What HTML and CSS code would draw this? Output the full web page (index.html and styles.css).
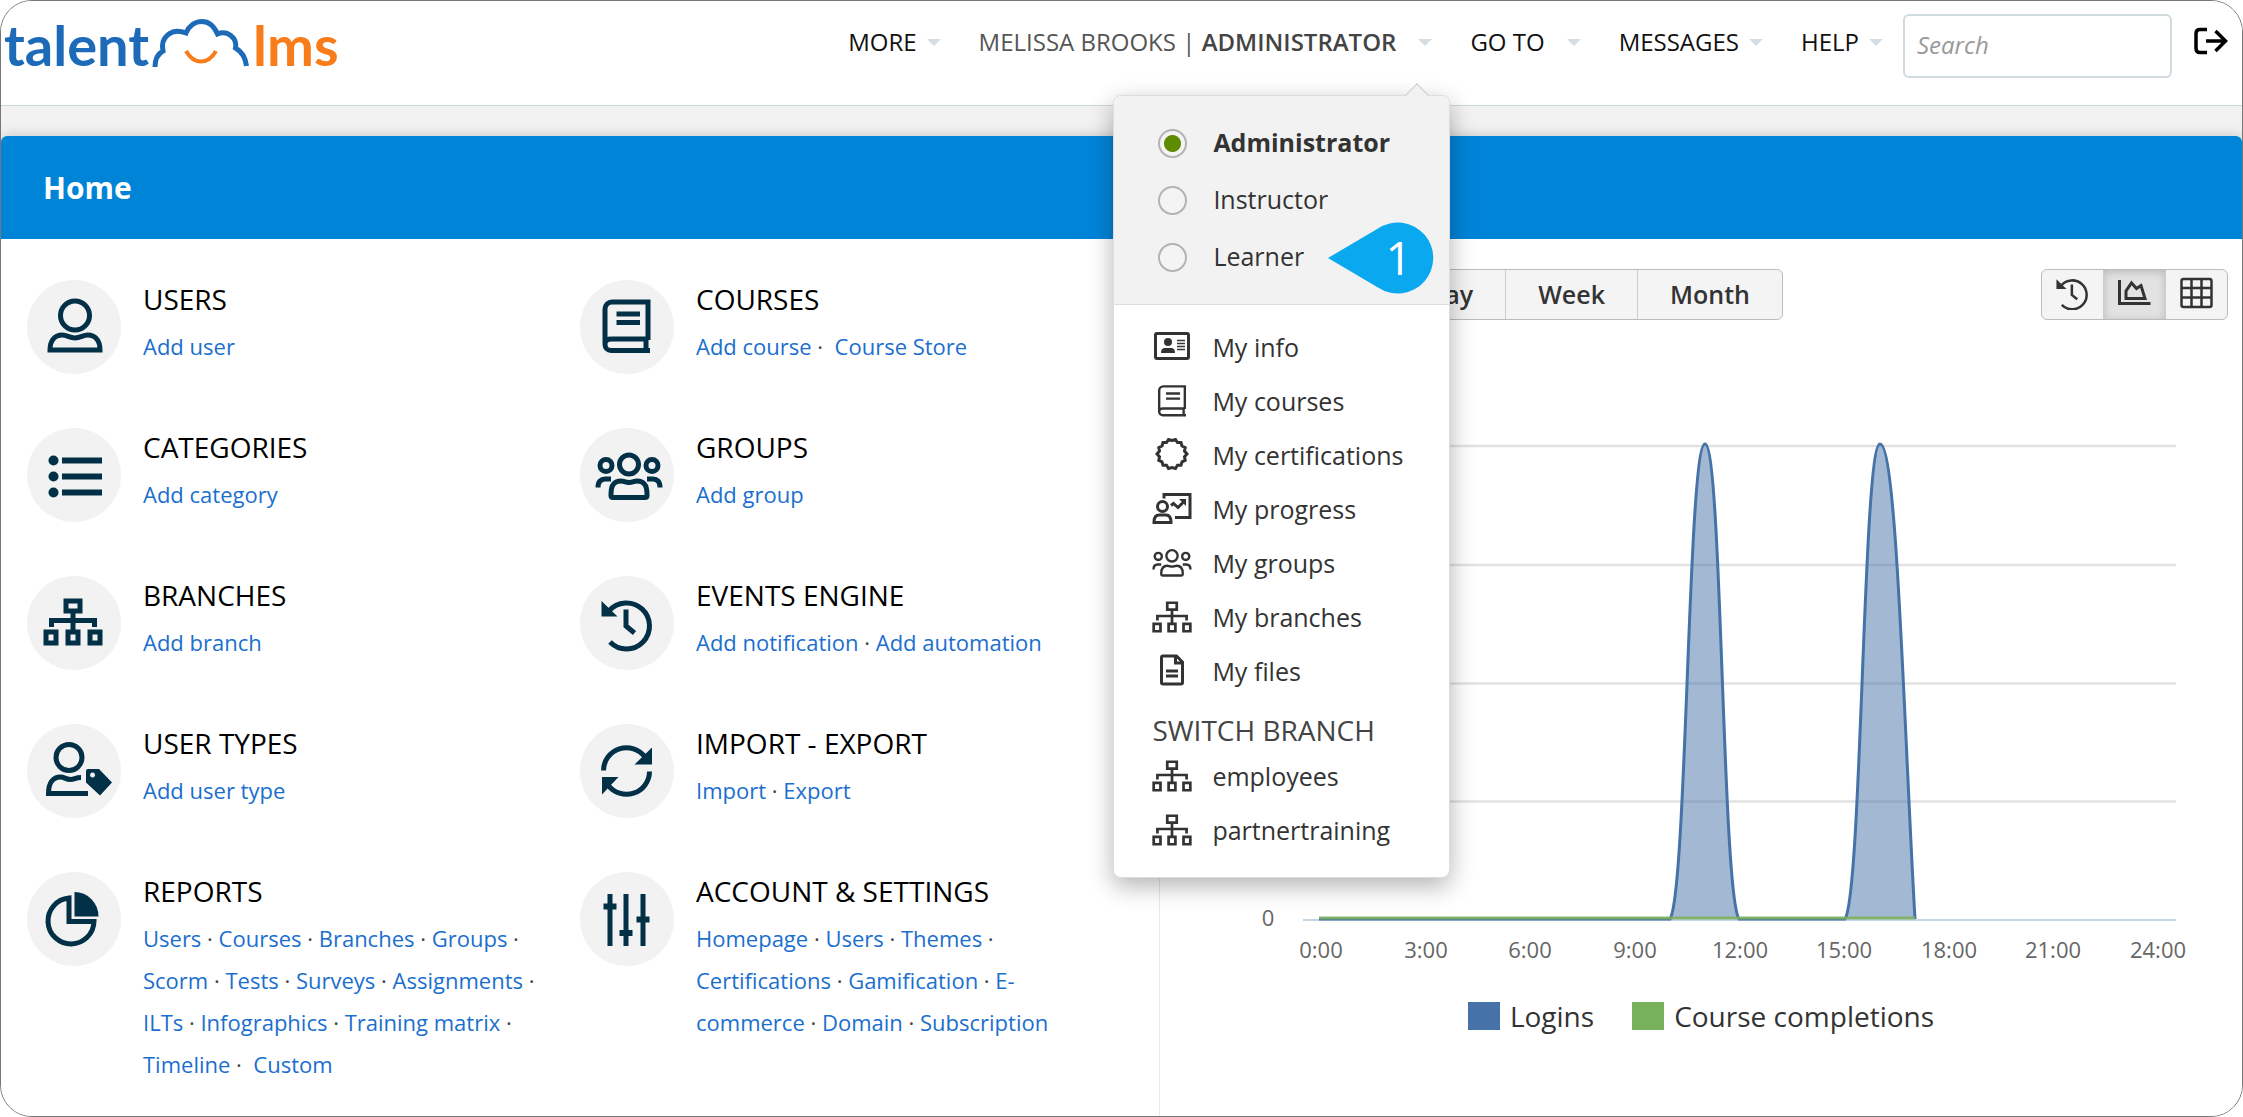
FILE: index.html
```html
<!DOCTYPE html>
<html lang="en">
<head>
<meta charset="utf-8">
<title>TalentLMS - Home</title>
<link rel="stylesheet" href="styles.css">
</head>
<body>
<svg class="defs" width="0" height="0" aria-hidden="true">
  <defs>
    <g id="i-user"><circle cx="48" cy="35.500" r="14.500"/><path d="M23 70c0-9 4.500-15 12.500-15 4.500 0 7 3 12.500 3s8-3 12.500-3C68.500 55 73 61 73 70z"/></g>
    <g id="i-list"><path d="M35 32.500h40M35 48.500h40M35 64.500h40" stroke-width="6"/><g class="solid"><circle cx="26.500" cy="32.500" r="5"/><circle cx="26.500" cy="48.500" r="5"/><circle cx="26.500" cy="64.500" r="5"/></g></g>
    <g id="i-sitemap"><path d="M39 25h14v10H39zM19 56h10v11H19zM41 56h10v11H41zM63 56h10v11H63zM46 36v20M24.500 51v-6.500h43V51"/></g>
    <g id="i-usertag"><circle cx="42" cy="33.500" r="13"/><path d="M61 69.500H21.500C21.500 59 26 53 33.500 53c4 0 5 2.500 10 2.500 4 0 5-2 10.500-2"/><path class="solid" fill-rule="evenodd" d="M59 47q0-2 2-2h11l13 13.500L73 71.500 59 58.500zM65.500 48.500a2.500 2.500 0 1 0 .1 0z"/></g>
    <g id="i-pie"><path d="M42 26v23.500h25A23 23 0 1 1 42 26z"/><path class="solid" d="M47.500 20a24 24.500 0 0 1 24 24.500h-24z"/></g>
    <g id="i-book"><path d="M68 60V22H32a7 7 0 0 0-7 7v35.500a6 6 0 0 0 6 6h39M25 63q1-4 6-4h37M66 59v11M36.500 34H60M36.500 42.500H60"/></g>
    <g id="i-groups"><circle cx="49" cy="36.500" r="9.500"/><circle cx="26" cy="37.500" r="6"/><circle cx="72" cy="37.500" r="6"/><path d="M31 66c0-9 3-13 10-13 3 0 4 1.500 8 1.500s5-1.500 8-1.500c7 0 10 4 10 13v1.500q0 2-2 2H33q-2 0-2-2zM18 59.500c0-6 3-8.500 7-8.500h6M80 59.500c0-6-3-8.500-7-8.500h-6"/></g>
    <g id="i-history"><path d="M29 35a23 23 0 1 1 1 31M46 33.500V50l8.500 7"/><path class="solid" d="M21.500 25v15.500h16z"/></g>
    <g id="i-sync"><path d="M23.500 46.500A23 23 0 0 1 65 33M69.500 47.500A23 23 0 0 1 28 61"/><path class="solid" d="M72 23.500v17H54.500zM22 70.500v-17.500h16.500z"/></g>
    <g id="i-sliders"><path d="M30 22v52M46 22v52M63 22v52" stroke-width="5"/><path d="M23.500 34.500h13M39.500 61h13M56.500 47.500h13" stroke-width="6"/></g>
  </defs>
</svg>

<div class="app">
  <header class="topbar">
    <a class="logo" href="#" aria-label="talentlms">
      <span class="logo-talent">talent</span>
      <svg class="logo-cloud" viewBox="152 16 98 52" aria-hidden="true"><path d="M155 67c0-7 2.500-13 8-16-3-13 8-24 23-18 3-7 9-11.500 16-11.500S214 26 217.500 34c10-4 20 4 18 14 7 4 10 10 11 18" fill="none" stroke="#1d6bb8" stroke-width="5"/><path d="M186 51q6 10.500 15 10.500T216 51" fill="none" stroke="#f97c1a" stroke-width="4"/></svg>
      <span class="logo-lms">lms</span>
    </a>
    <nav class="nav">
      <button class="nav-item" type="button">MORE</button>
      <div class="nav-user">
        <button class="nav-item nav-item-wide nav-item-current" type="button"><span>MELISSA BROOKS | <strong>ADMINISTRATOR</strong></span></button>
        <div class="popup">
          <fieldset class="roles" aria-label="Role">
            <label class="role"><input type="radio" name="role" checked><span>Administrator</span></label>
            <label class="role"><input type="radio" name="role"><span>Instructor</span></label>
            <label class="role"><input type="radio" name="role"><span>Learner</span></label>
          </fieldset>
          <div class="menu">
            <a href="#"><svg viewBox="0 0 40 34"><rect x="3.500" y="3.500" width="33" height="25" rx="1.500" stroke-width="3"/><path stroke-width="1.500" d="M25 10.500h8M25 13.500h8M25 16.500h8M25 19.500h8"/><g class="solid"><circle cx="16" cy="12" r="4"/><path d="M9 23q0-5 4-5h6q4 0 4 5z"/></g></svg>My info</a>
            <a href="#"><svg viewBox="13 18 67 57"><use href="#i-book"/></svg>My courses</a>
            <a href="#"><svg viewBox="0 0 40 34"><path stroke-width="3" d="M20 2.500 23.500 1.500 25.500 4.500 29 4.500 30 8 33.200 9.500 32.500 13 35 16 32.500 18.700 33.200 22.300 30 23.800 29 27.300 25.500 27.300 23.500 30.500 20 29.500 16.500 30.500 14.500 27.300 11 27.300 10 23.800 6.800 22.300 7.500 18.700 5 16 7.500 13 6.800 9.500 10 8 11 4.500 14.500 4.500 16.500 1.500z"/></svg>My certifications</a>
            <a href="#"><svg viewBox="0 0 40 34"><path stroke-width="3" d="M12 6.500V2.500h26v23H23M19 13.500l2.500-2 4.500 4 6-6"/><circle cx="10.500" cy="14.500" r="5" stroke-width="3"/><path stroke-width="3" d="M2 30.500c0-5.500 2-7.500 5-7.500h7c3 0 5 2 5 7.500z"/><path class="solid" d="M27 7h7v7z"/></svg>My progress</a>
            <a href="#"><svg viewBox="15.500 20 67 57"><use href="#i-groups"/></svg>My groups</a>
            <a href="#"><svg viewBox="16.500 21 59 50"><use href="#i-sitemap"/></svg>My branches</a>
            <a href="#"><svg viewBox="0 0 40 34"><path stroke-width="3" d="M24.500 2H11q-1.500 0-1.500 1.500v25q0 1.500 1.500 1.500h18q1.500 0 1.500-1.500V8zM23.500 2.500V9h7M14 17h12M14 22h12"/></svg>My files</a>
            <h2 class="menu-title">SWITCH BRANCH</h2>
            <a href="#"><svg viewBox="16.500 21 59 50"><use href="#i-sitemap"/></svg>employees</a>
            <a href="#"><svg viewBox="16.500 21 59 50"><use href="#i-sitemap"/></svg>partnertraining</a>
          </div>
          <div class="callout"><svg viewBox="0 0 106 72" aria-hidden="true"><path fill="#0aa8ef" d="M0 36 50 6.500A35.500 35.500 0 1 1 50 65.500z"/></svg><span>1</span></div>
        </div>
      </div>
      <button class="nav-item nav-item-wide" type="button">GO TO</button>
      <button class="nav-item" type="button">MESSAGES</button>
      <button class="nav-item" type="button">HELP</button>
    </nav>
    <input class="search" type="search" placeholder="Search" aria-label="Search">
    <button class="logout" type="button" aria-label="Log out"><svg viewBox="0 0 34 28"><path d="M13 2.500H6q-4 0-4 4v15q0 4 4 4h7M12 14h19M21.500 4l10 10-10 10" fill="none" stroke="#000" stroke-width="3.500"/></svg></button>
  </header>

  <main class="page">
    <h1 class="page-title">Home</h1>
    <div class="columns">
      <div class="tiles">
        <section class="tile"><svg class="tile-icon" viewBox="0 0 94 94"><use href="#i-user"/></svg><div><h2>USERS</h2><p><a href="#">Add user</a></p></div></section>
        <section class="tile"><svg class="tile-icon" viewBox="0 0 94 94"><use href="#i-book"/></svg><div><h2>COURSES</h2><p><a href="#">Add course</a> · &nbsp;<a href="#">Course Store</a></p></div></section>
        <section class="tile"><svg class="tile-icon" viewBox="0 0 94 94"><use href="#i-list"/></svg><div><h2>CATEGORIES</h2><p><a href="#">Add category</a></p></div></section>
        <section class="tile"><svg class="tile-icon" viewBox="0 0 94 94"><use href="#i-groups"/></svg><div><h2>GROUPS</h2><p><a href="#">Add group</a></p></div></section>
        <section class="tile"><svg class="tile-icon" viewBox="0 0 94 94"><use href="#i-sitemap"/></svg><div><h2>BRANCHES</h2><p><a href="#">Add branch</a></p></div></section>
        <section class="tile"><svg class="tile-icon" viewBox="0 0 94 94"><use href="#i-history"/></svg><div><h2>EVENTS ENGINE</h2><p><a href="#">Add notification</a> · <a href="#">Add automation</a></p></div></section>
        <section class="tile"><svg class="tile-icon" viewBox="0 0 94 94"><use href="#i-usertag"/></svg><div><h2>USER TYPES</h2><p><a href="#">Add user type</a></p></div></section>
        <section class="tile"><svg class="tile-icon" viewBox="0 0 94 94"><use href="#i-sync"/></svg><div><h2>IMPORT - EXPORT</h2><p><a href="#">Import</a> · <a href="#">Export</a></p></div></section>
        <section class="tile"><svg class="tile-icon" viewBox="0 0 94 94"><use href="#i-pie"/></svg><div><h2>REPORTS</h2><p><a href="#">Users</a> · <a href="#">Courses</a> · <a href="#">Branches</a> · <a href="#">Groups</a> · <a href="#">Scorm</a> · <a href="#">Tests</a> · <a href="#">Surveys</a> · <a href="#">Assignments</a> · <a href="#">ILTs</a> · <a href="#">Infographics</a> · <a href="#">Training matrix</a> · <a href="#">Timeline</a> · &nbsp;<a href="#">Custom</a></p></div></section>
        <section class="tile"><svg class="tile-icon" viewBox="0 0 94 94"><use href="#i-sliders"/></svg><div><h2>ACCOUNT &amp; SETTINGS</h2><p><a href="#">Homepage</a> · <a href="#">Users</a> · <a href="#">Themes</a> · <a href="#">Certifications</a> · <a href="#">Gamification</a> · <a href="#">E-commerce</a> · <a href="#">Domain</a> · <a href="#">Subscription</a></p></div></section>
      </div>

      <section class="stats">
        <div class="toolbar">
          <div class="group">
            <button type="button">Day</button><button type="button">Week</button><button type="button">Month</button>
          </div>
          <div class="group group-icons">
            <button type="button" aria-label="Timeline"><svg viewBox="20 20 54 54"><use href="#i-history"/></svg></button>
            <button type="button" class="active" aria-label="Chart"><svg viewBox="0 0 34 34"><path stroke-width="3" d="M2 4v23.500h31M8.500 22.500v-7.500l5.500-8 5 5.500 4.500-3L27.500 22.500z"/></svg></button>
            <button type="button" aria-label="Table"><svg viewBox="0 0 34 34"><path stroke-width="2.500" d="M4 3h26q2 0 2 2v24q0 2-2 2H4q-2 0-2-2V5q0-2 2-2zM12 3v28M22 3v28M2 12h30M2 21.500h30"/></svg></button>
          </div>
        </div>
        <svg class="chart" viewBox="0 0 1082 580" role="img" aria-label="Logins and course completions by hour">
          <path d="M143 46h873M143 165h873M143 283.500h873M143 401.500h873" stroke="#e2e2e2" stroke-width="2.500"/>
          <path d="M143 520h873" stroke="#c5d5e4" stroke-width="2"/>
          <path d="M159 519H510C527 492 528 44 545 44S562 492 579 519H685C702 492 703 44 720 44C737 44 744 330 755 519z" fill="#4572a7" fill-opacity=".5" stroke="none"/>
          <path d="M159 519H510C527 492 528 44 545 44S562 492 579 519H685C702 492 703 44 720 44C737 44 744 330 755 519" fill="none" stroke="#4572a7" stroke-width="3"/>
          <path d="M159 518h596" stroke="#7cb05c" stroke-opacity=".85" stroke-width="3"/>
          <g class="chart-labels">
            <text x="108" y="526">0</text>
            <text x="161" y="558">0:00</text><text x="266" y="558">3:00</text><text x="370" y="558">6:00</text><text x="475" y="558">9:00</text><text x="580" y="558">12:00</text><text x="684" y="558">15:00</text><text x="789" y="558">18:00</text><text x="893" y="558">21:00</text><text x="998" y="558">24:00</text>
          </g>
        </svg>
        <ul class="legend"><li class="logins">Logins</li><li class="completions">Course completions</li></ul>
      </section>
    </div>
  </main>
</div>
</body>
</html>
```
FILE: styles.css
```css
* { box-sizing: border-box; }

body {
  margin: 0;
  background: #fff;
  color: #333;
  font-family: "Open Sans", "Noto Sans", sans-serif;
  font-size: 24px;
}

button, input { font: inherit; color: inherit; }
button { border: 0; background: none; padding: 0; cursor: pointer; }
a { text-decoration: none; }
h1, h2, p, ul { margin: 0; padding: 0; }
svg { display: block; fill: none; stroke: currentColor; stroke-width: 4; }
.solid { fill: currentColor; stroke: none; }
.defs { position: absolute; }

.app {
  display: flex;
  flex-direction: column;
  min-height: 100vh;
  border: 1px solid #777;
  border-radius: 32px;
  background: #f2f2f2;
  overflow: hidden;
}

/* Top bar */
.topbar {
  display: flex;
  align-items: flex-start;
  height: 105px;
  padding: 13px 14px 0 3px;
  background: #fff;
  border-bottom: 1px solid #cbd6dc;
}

.logo {
  display: flex;
  align-items: flex-end;
  gap: 3px;
  height: 56px;
  font-family: Lato, "Open Sans", sans-serif;
  font-size: 56px;
  font-weight: 700;
  line-height: 50px;
}
.logo-talent { color: #1d6bb8; }
.logo-lms { color: #f97c1a; }
.logo-cloud { width: 98px; height: 52px; margin-bottom: 2px; }

.nav { display: flex; gap: 38px; margin: 10px 20px 0 auto; }
.nav-item {
  display: flex;
  align-items: center;
  gap: 10px;
  line-height: 36px;
  white-space: nowrap;
  color: #111;
}
.nav-item-wide { gap: 22px; }
.nav-item-current { color: #555; }
.nav-item strong { font-weight: 600; color: #444; }
.nav-item::after {
  content: "";
  border: 7px solid transparent;
  border-top-color: #d5dfe3;
  border-bottom: 0;
}
.nav-user { position: relative; }

.search {
  width: 269px;
  height: 64px;
  padding: 0 12px 4px;
  border: 2px solid #d0dbe0;
  border-radius: 6px;
  background: #fff;
  appearance: none;
}
.search::placeholder { color: #999; font-style: italic; opacity: 1; }
.logout { margin: 13px 0 0 22px; }
.logout svg { width: 34px; height: 28px; }

/* Account menu */
.popup {
  position: absolute;
  top: 71px;
  right: -18px;
  z-index: 5;
  width: 337px;
  border: 1px solid #ddd;
  border-radius: 8px;
  background: #fff;
  box-shadow: 0 8px 24px rgba(0, 0, 0, .3);
}
.popup::before {
  content: "";
  position: absolute;
  top: -9px;
  right: 23px;
  width: 17px;
  height: 17px;
  border: 1px solid #ccc;
  border-right: 0;
  border-bottom: 0;
  background: #f2f2f2;
  transform: rotate(45deg);
}
.roles {
  position: relative;
  margin: 0;
  padding: 19px 0 18px 44px;
  border: 0;
  border-bottom: 1px solid #ddd;
  border-radius: 8px 8px 0 0;
  background: #f2f2f2;
}
.role { display: flex; align-items: center; gap: 26px; height: 57px; font-size: 25px; }
.role span { padding-bottom: 4px; }
.role input {
  appearance: none;
  width: 29px;
  height: 29px;
  margin: 0;
  border: 2px solid #b3b3b3;
  border-radius: 50%;
  background: #f4f4f4;
}
.role input:checked { background: radial-gradient(circle, #5e8c00 8px, #f4f4f4 9px); }
.role input:checked + span { font-weight: 700; }
.menu { padding: 15px 0 20px 38px; }
.menu a { display: flex; align-items: center; gap: 20px; height: 54px; font-size: 25px; color: #333; }
.menu svg { width: 40px; height: 34px; }
.menu-title { padding-top: 13px; font-size: 28px; font-weight: 500; line-height: 38px; color: #444; }

.callout { position: absolute; top: 126px; left: 214px; width: 106px; height: 72px; }
.callout svg { stroke: none; }
.callout span {
  position: absolute;
  top: 0;
  left: 57px;
  font-size: 46px;
  line-height: 70px;
  color: #fff;
}

/* Page body */
.page {
  flex: 1;
  display: flex;
  flex-direction: column;
  margin-top: 30px;
  border-radius: 6px 6px 0 0;
  background: #fff;
  box-shadow: 0 0 14px rgba(0, 0, 0, .2);
}
.page-title {
  padding: 0 42px;
  border-radius: 6px 6px 0 0;
  background: #0084d8;
  color: #fff;
  font-size: 30px;
  font-weight: 700;
  line-height: 103px;
}
.columns { flex: 1; display: grid; grid-template-columns: minmax(0, 1158fr) minmax(0, 1083fr); }

.tiles {
  display: grid;
  grid-template-columns: 1fr 1fr;
  grid-auto-rows: minmax(148px, auto);
  align-content: start;
  padding: 41px 26px 30px;
}
.tile { display: flex; align-items: flex-start; gap: 22px; padding-right: 16px; }
.tile-icon {
  flex: none;
  width: 94px;
  height: 94px;
  border-radius: 50%;
  background: #f2f2f2;
  color: #023047;
  stroke-width: 5;
}
.tile h2 { margin-bottom: 7px; font-size: 28px; font-weight: 500; line-height: 38px; color: #000; }
.tile p { font-size: 22px; line-height: 42px; color: #444; }
.tile a { color: #1a6fce; }

/* Statistics */
.stats { border-left: 1px solid #e8e8e8; padding-top: 30px; }
.toolbar { display: flex; justify-content: space-between; padding: 0 14px 0 234px; }
.group { display: flex; height: 51px; border: 1px solid #bbb; border-radius: 6px; background: #f4f4f4; overflow: hidden; }
.group button { padding: 0 32px 2px; font-size: 25px; font-weight: 600; }
.group button + button { border-left: 1px solid #ccc; }
.group-icons button { padding: 0 13px 4px; }
.group-icons svg { width: 35px; height: 34px; }
.group-icons .active { background: #e2e2e2; box-shadow: inset 0 2px 8px rgba(0, 0, 0, .18); }
.chart { width: 100%; height: auto; margin-top: 80px; }
.chart-labels { fill: #666; stroke: none; font-size: 22px; text-anchor: middle; }
.legend {
  display: flex;
  justify-content: center;
  gap: 38px;
  margin-top: 17px;
  list-style: none;
  font-size: 28px;
  line-height: 38px;
}
.legend li { display: flex; align-items: center; gap: 10px; }
.legend li::before { content: ""; width: 32px; height: 28px; background: #4572a7; }
.legend .completions::before { background: #78b15c; }
```
